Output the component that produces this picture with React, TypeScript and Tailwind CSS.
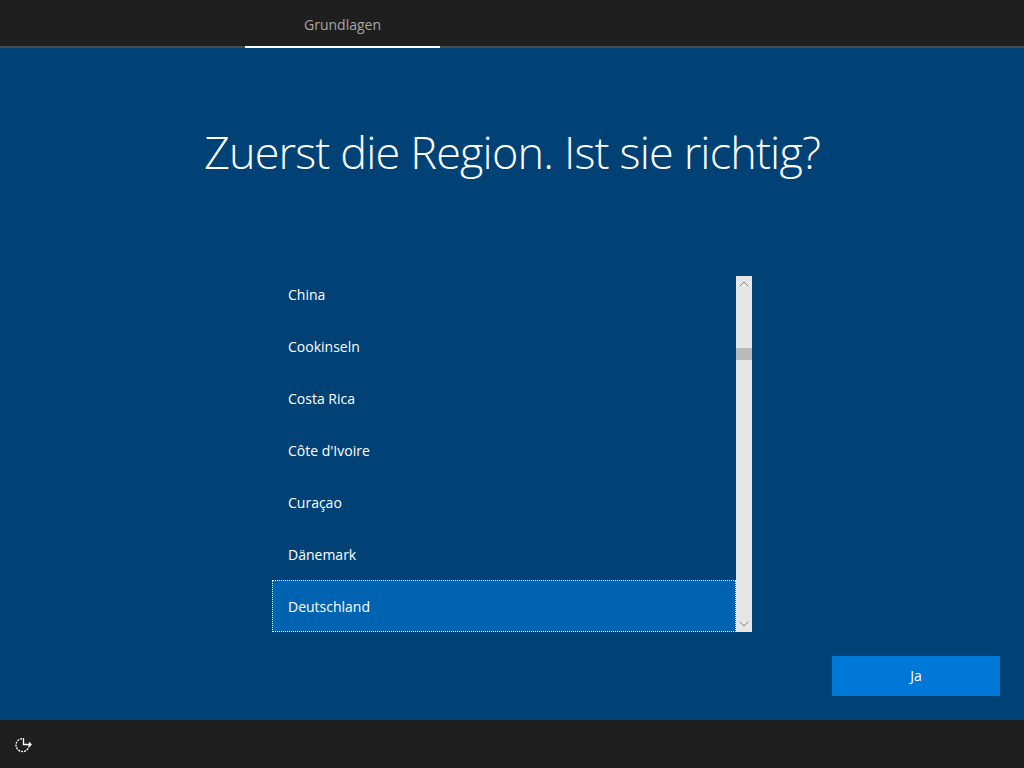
const regions = ["China", "Cookinseln", "Costa Rica", "Côte d'Ivoire", "Curaçao", "Dänemark", "Deutschland"];

const font = "font-['Open_Sans','Noto_Sans',sans-serif]";

function AccessIcon() {
  return (
    <svg width="20" height="20" viewBox="0 0 20 20" fill="none" stroke="white" strokeWidth="1.3">
      <path d="M8 4.6a6.5 6.5 0 1 0 7 6.4" strokeDasharray="2 1" />
      <path d="M9.5 4v6.5h7.5" />
      <path d="M15 8.5l2 2-2 2" />
    </svg>
  );
}

export default function App() {
  return (
    <div className={`flex h-screen w-full flex-col overflow-hidden bg-[#004275] text-white ${font}`}>
      <header className="h-12 shrink-0 border-b-2 border-[#4c4c4c] bg-[#1f1f1f] pl-[245px]">
        <div className="-mb-[2px] flex h-12 w-[195px] items-center justify-center border-b-2 border-white pt-[3px] text-sm text-[#a6a6a6]">
          Grundlagen
        </div>
      </header>

      <main className="flex min-h-0 flex-1 flex-col">
        <h1 className="mt-[72px] text-center text-[45px] leading-[63px] font-light tracking-[-0.85px]">
          Zuerst die Region. Ist sie richtig?
        </h1>

        <div className="mt-[93px] ml-[272px] flex h-[356px] w-[480px]">
          <ul className="w-[464px] -mt-2">
            {regions.map((name) => (
              <li
                key={name}
                className={
                  name === "Deutschland"
                    ? "flex h-[52px] items-center border border-dotted border-white bg-[#0063b1] pt-px pl-[15px] text-sm"
                    : "flex h-[52px] items-center pt-[2px] pl-4 text-sm"
                }
              >
                {name}
              </li>
            ))}
          </ul>
          <div className="flex w-4 flex-col bg-[#e6e6e6]">
            <div className="flex h-4 items-center justify-center">
              <svg width="10" height="6" viewBox="0 0 10 6" fill="none" stroke="#858585" strokeWidth="1">
                <path d="M0.5 5.5L5 1l4.5 4.5" />
              </svg>
            </div>
            <div className="mt-14 h-3 bg-[#bababa]" />
            <div className="mt-auto flex h-4 items-center justify-center">
              <svg width="10" height="6" viewBox="0 0 10 6" fill="none" stroke="#858585" strokeWidth="1">
                <path d="M0.5 0.5L5 5l4.5-4.5" />
              </svg>
            </div>
          </div>
        </div>

        <div className="mt-6 flex justify-end pr-6">
          <button className="h-10 w-[168px] bg-[#0078d7] text-sm text-white">Ja</button>
        </div>
      </main>

      <footer className="flex h-12 shrink-0 items-center bg-[#1f1f1f] pl-[14px]">
        <AccessIcon />
      </footer>
    </div>
  );
}
